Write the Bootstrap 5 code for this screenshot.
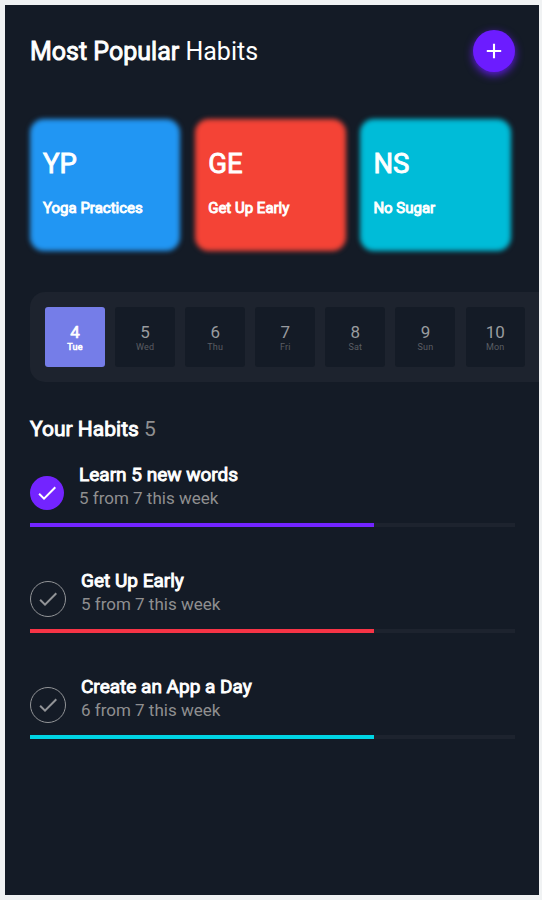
<!DOCTYPE html>
<html lang="en">
<head>
<meta charset="utf-8">
<meta name="viewport" content="width=device-width, initial-scale=1">
<title>Habits</title>
<link href="https://cdn.jsdelivr.net/npm/bootstrap@5.3.0/dist/css/bootstrap.min.css" rel="stylesheet">
<style>
body{background:#f0f2f3;font-family:Roboto,sans-serif;color:#fff}
.screen{width:534px;height:890px;margin:5px 0 0 5px;padding:25px 24px 0 25px;background:#141b26}
.heavy{-webkit-text-stroke:.9px currentColor}
.app-title{font-size:25px;line-height:40px;padding-top:2px;font-weight:400}
.add-btn{width:42px;height:42px;background:#6c1cff;box-shadow:0 3px 8px #6c1cffd9}
.tiles{margin-top:47px;gap:15.2px}
.tile{width:150px;height:132px;padding:29px 13px 0;isolation:isolate}
.tile::before{content:"";position:absolute;inset:-.5px -.4px .5px 0;border-radius:14px;background:var(--c);filter:blur(2.6px);z-index:-1}
.tile-code{font-size:27.5px;line-height:32px}
.tile-name{font-size:15px;line-height:18px;margin-top:19px}
.blue{--c:#2196f3}.red{--c:#f44336}.cyan{--c:#00bcd8}
.days{margin:41px -24px 0 0;height:90px;padding:15px 0 0 15px;gap:10.1px;border-radius:15px 0 0 15px;background:#1d232e}
.day{width:60px;height:60px;padding-top:14px;border-radius:3px;background:#141b26}
.day-num{font-size:17px;line-height:22px;color:#999b9f}
.day-name{font-size:9px;line-height:10px;color:#5a5d63;letter-spacing:.2px;margin-top:-1px}
.day:last-child{width:59.4px}
.day.on{background:#757de8}
.day.on div{color:#fff}
.day.on .heavy{-webkit-text-stroke-width:.6px}
.section-title{margin-top:34px;font-size:21px;line-height:26px;font-weight:400}
.dim{color:#8f8f90}
.habits{padding-top:21px}
.habit{margin-bottom:42px}
.habit-row{height:48px}
.tick{width:36px;height:36px;border:1px solid #929497;color:#929497}
.tick.done{width:34px;height:34px;border:0;background:#7324ff;color:#fff;margin-bottom:1px}
.habit-text{margin-left:15px;height:48px}
.habit-name{font-size:19px;line-height:24px}
.habit-sub{font-size:17px;line-height:22px}
.track{margin-top:12px;height:4px;border-radius:0;background:#1d232e}
</style>
<script src="https://cdn.jsdelivr.net/npm/bootstrap@5.3.0/dist/js/bootstrap.bundle.min.js"></script>
</head>
<body>
<main class="screen overflow-hidden">
  <header class="d-flex justify-content-between align-items-center">
    <h1 class="app-title m-0"><span class="heavy">Most Popular</span> Habits</h1>
    <button class="add-btn btn p-0 border-0 rounded-circle d-flex align-items-center justify-content-center" aria-label="Add habit">
      <svg width="24" height="24" viewBox="0 0 24 24" fill="none" stroke="#fff" stroke-width="2.1"><path d="M12 4.8v14.4M4.8 12h14.4"/></svg>
    </button>
  </header>

  <section class="tiles d-flex">
    <div class="tile blue position-relative flex-shrink-0"><div class="tile-code heavy">YP</div><div class="tile-name heavy">Yoga Practices</div></div>
    <div class="tile red position-relative flex-shrink-0"><div class="tile-code heavy">GE</div><div class="tile-name heavy">Get Up Early</div></div>
    <div class="tile cyan position-relative flex-shrink-0"><div class="tile-code heavy">NS</div><div class="tile-name heavy">No Sugar</div></div>
  </section>

  <section class="days d-flex text-center">
    <div class="day on flex-shrink-0"><div class="day-num heavy">4</div><div class="day-name heavy">Tue</div></div>
    <div class="day flex-shrink-0"><div class="day-num">5</div><div class="day-name">Wed</div></div>
    <div class="day flex-shrink-0"><div class="day-num">6</div><div class="day-name">Thu</div></div>
    <div class="day flex-shrink-0"><div class="day-num">7</div><div class="day-name">Fri</div></div>
    <div class="day flex-shrink-0"><div class="day-num">8</div><div class="day-name">Sat</div></div>
    <div class="day flex-shrink-0"><div class="day-num">9</div><div class="day-name">Sun</div></div>
    <div class="day flex-shrink-0"><div class="day-num">10</div><div class="day-name">Mon</div></div>
  </section>

  <h2 class="section-title mb-0"><span class="heavy">Your Habits</span> <span class="dim">5</span></h2>

  <section class="habits">
    <article class="habit">
      <div class="habit-row d-flex align-items-end">
        <span class="tick done rounded-circle d-flex align-items-center justify-content-center flex-shrink-0"><svg width="24" height="24" viewBox="0 0 24 24" fill="currentColor"><path d="M9 16.17 4.83 12l-1.42 1.41L9 19 21 7l-1.41-1.41z"/></svg></span>
        <div class="habit-text"><div class="habit-name heavy">Learn 5 new words</div><div class="habit-sub dim">5 from 7 this week</div></div>
      </div>
      <div class="track progress"><div class="progress-bar" style="width:70.9%;background:#7324ff"></div></div>
    </article>
    <article class="habit">
      <div class="habit-row d-flex align-items-end">
        <span class="tick rounded-circle d-flex align-items-center justify-content-center flex-shrink-0"><svg width="24" height="24" viewBox="0 0 24 24" fill="currentColor"><path d="M9 16.17 4.83 12l-1.42 1.41L9 19 21 7l-1.41-1.41z"/></svg></span>
        <div class="habit-text"><div class="habit-name heavy">Get Up Early</div><div class="habit-sub dim">5 from 7 this week</div></div>
      </div>
      <div class="track progress"><div class="progress-bar" style="width:70.9%;background:#f73446"></div></div>
    </article>
    <article class="habit">
      <div class="habit-row d-flex align-items-end">
        <span class="tick rounded-circle d-flex align-items-center justify-content-center flex-shrink-0"><svg width="24" height="24" viewBox="0 0 24 24" fill="currentColor"><path d="M9 16.17 4.83 12l-1.42 1.41L9 19 21 7l-1.41-1.41z"/></svg></span>
        <div class="habit-text"><div class="habit-name heavy">Create an App a Day</div><div class="habit-sub dim">6 from 7 this week</div></div>
      </div>
      <div class="track progress"><div class="progress-bar" style="width:70.9%;background:#00d5e4"></div></div>
    </article>
  </section>
</main>
</body>
</html>
